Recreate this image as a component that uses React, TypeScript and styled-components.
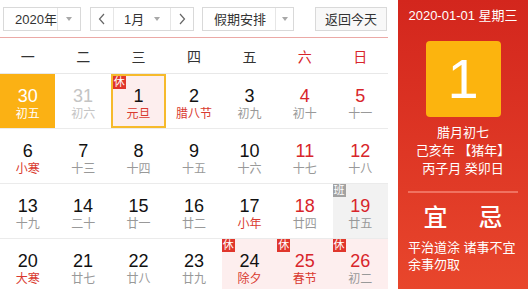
import styled, {createGlobalStyle, css} from "styled-components";

type Day = {
    num: number;
    lunar: string;
    other?: boolean;
    today?: boolean;
    selected?: boolean;
    weekend?: boolean;
    festival?: boolean;
    badge?: "休" | "班";
};

const weeks: Day[][] = [
    [
        {num: 30, lunar: "初五", other: true, today: true},
        {num: 31, lunar: "初六", other: true},
        {num: 1, lunar: "元旦", selected: true, festival: true, badge: "休"},
        {num: 2, lunar: "腊八节", festival: true},
        {num: 3, lunar: "初九"},
        {num: 4, lunar: "初十", weekend: true},
        {num: 5, lunar: "十一", weekend: true},
    ],
    [
        {num: 6, lunar: "小寒", festival: true},
        {num: 7, lunar: "十三"},
        {num: 8, lunar: "十四"},
        {num: 9, lunar: "十五"},
        {num: 10, lunar: "十六"},
        {num: 11, lunar: "十七", weekend: true},
        {num: 12, lunar: "十八", weekend: true},
    ],
    [
        {num: 13, lunar: "十九"},
        {num: 14, lunar: "二十"},
        {num: 15, lunar: "廿一"},
        {num: 16, lunar: "廿二"},
        {num: 17, lunar: "小年", festival: true},
        {num: 18, lunar: "廿四", weekend: true},
        {num: 19, lunar: "廿五", weekend: true, badge: "班"},
    ],
    [
        {num: 20, lunar: "大寒", festival: true},
        {num: 21, lunar: "廿七"},
        {num: 22, lunar: "廿八"},
        {num: 23, lunar: "廿九"},
        {num: 24, lunar: "除夕", festival: true, badge: "休"},
        {num: 25, lunar: "春节", weekend: true, festival: true, badge: "休"},
        {num: 26, lunar: "初二", weekend: true, badge: "休"},
    ],
];

const weekdays = ["一", "二", "三", "四", "五", "六", "日"];

const Chevron = ({dir}: { dir: "left" | "right" }) => (
    <svg width="8" height="12" viewBox="0 0 8 12">
        <polyline
            points={dir === "left" ? "6,1 1.5,6 6,11" : "2,1 6.5,6 2,11"}
            fill="none"
            stroke="#666"
            strokeWidth="1.2"
        />
    </svg>
);

export default function App() {
    return (
        <>
            <GlobalStyle/>
            <Widget>
                <Main>
                    <Toolbar>
                        <SelectBox $width={78}>
                            <SelectLabel>2020年</SelectLabel>
                            <CaretCell><Caret/></CaretCell>
                        </SelectBox>
                        <MonthGroup>
                            <StepButton><Chevron dir="left"/></StepButton>
                            <MonthLabel>
                                <span>1月</span>
                                <Caret/>
                            </MonthLabel>
                            <StepButton><Chevron dir="right"/></StepButton>
                        </MonthGroup>
                        <SelectBox $width={92}>
                            <SelectLabel>假期安排</SelectLabel>
                            <CaretCell $narrow><Caret/></CaretCell>
                        </SelectBox>
                        <TodayButton>返回今天</TodayButton>
                    </Toolbar>

                    <WeekHeader>
                        {weekdays.map((w, i) => (
                            <WeekdayCell key={w} $weekend={i >= 5}>{w}</WeekdayCell>
                        ))}
                    </WeekHeader>

                    {weeks.map((week, wi) => (
                        <WeekRow key={wi}>
                            {week.map(d => (
                                <DayCell
                                    key={`${wi}-${d.num}`}
                                    $today={d.today}
                                    $selected={d.selected}
                                    $rest={d.badge === "休"}
                                    $work={d.badge === "班"}
                                >
                                    {d.badge && <Badge $work={d.badge === "班"}>{d.badge}</Badge>}
                                    <DayNum $today={d.today} $other={d.other} $weekend={d.weekend}>
                                        {d.num}
                                    </DayNum>
                                    <Lunar $today={d.today} $other={d.other} $festival={d.festival}>
                                        {d.lunar}
                                    </Lunar>
                                </DayCell>
                            ))}
                        </WeekRow>
                    ))}
                </Main>

                <Side>
                    <SideDate>2020-01-01 星期三</SideDate>
                    <BigDay>1</BigDay>
                    <LunarInfo>
                        <div>腊月初七</div>
                        <div>己亥年 【猪年】</div>
                        <div>丙子月 癸卯日</div>
                    </LunarInfo>
                    <SideRule/>
                    <YiJi>
                        <span>宜</span>
                        <span>忌</span>
                    </YiJi>
                    <Advice>
                        平治道涂 诸事不宜<br/>余事勿取
                    </Advice>
                </Side>
            </Widget>
        </>
    );
}

const GlobalStyle = createGlobalStyle`
    body {
        margin: 0;
        background: #fff;
        font-family: "Liberation Sans", Arial, "Noto Sans CJK SC", sans-serif;
    }
`

const Widget = styled.div`
    display: flex;
    justify-content: space-between;
    width: 528px;
    height: 289px;
    overflow: hidden;
`

const Main = styled.div`
    width: 388px;
    flex: 0 0 388px;
`

const Toolbar = styled.div`
    display: flex;
    align-items: center;
    height: 37px;
    padding-left: 3px;
    border-bottom: 1px solid #eba9a6;
    color: #333;
    font-size: 13px;
`

const boxBorder = css`
    border: 1px solid #d9d9d9;
    background: #fff;
    box-sizing: border-box;
    height: 24px;
`

const SelectBox = styled.div<{ $width: number }>`
    ${boxBorder};
    display: flex;
    width: ${p => p.$width}px;
    margin-right: 9px;
`

const SelectLabel = styled.div`
    flex: 1;
    display: flex;
    align-items: center;
    padding-left: 11px;
    white-space: nowrap;
`

const CaretCell = styled.div<{ $narrow?: boolean }>`
    width: ${p => (p.$narrow ? 17 : 23)}px;
    display: flex;
    align-items: center;
    justify-content: center;
    border-left: 1px solid #e6e6e6;
`

const Caret = styled.i`
    display: inline-block;
    width: 0;
    height: 0;
    border-left: 3.5px solid transparent;
    border-right: 3.5px solid transparent;
    border-top: 4px solid #a8a8a8;
`

const MonthGroup = styled.div`
    ${boxBorder};
    display: flex;
    width: 104px;
    margin-right: 8px;
`

const StepButton = styled.div`
    width: 22px;
    display: flex;
    align-items: center;
    justify-content: center;
`

const MonthLabel = styled.div`
    flex: 1;
    display: flex;
    align-items: center;
    justify-content: space-between;
    padding: 0 10px;
    border-left: 1px solid #e6e6e6;
    border-right: 1px solid #e6e6e6;
`

const TodayButton = styled.div`
    ${boxBorder};
    width: 72px;
    margin-left: 12px;
    display: flex;
    align-items: center;
    justify-content: center;
    background: #f8f8f8;
`

const WeekHeader = styled.div`
    display: grid;
    grid-template-columns: repeat(7, 1fr);
    height: 35px;
    border-bottom: 1px solid #e8e8e8;
`

const WeekdayCell = styled.div<{ $weekend?: boolean }>`
    display: flex;
    align-items: center;
    justify-content: center;
    font-size: 14px;
    color: ${p => (p.$weekend ? "#d8252b" : "#333")};
`

const WeekRow = styled.div`
    display: grid;
    grid-template-columns: repeat(7, 1fr);
    height: 55px;
    box-sizing: border-box;
    border-bottom: 1px solid #ebebeb;
`

const DayCell = styled.div<{ $today?: boolean; $selected?: boolean; $rest?: boolean; $work?: boolean }>`
    position: relative;
    display: flex;
    flex-direction: column;
    align-items: center;
    padding-top: 12px;
    box-sizing: border-box;
    background: ${p => p.$today ? "#fbb114" : p.$rest ? "#fdeeee" : p.$work ? "#f2f2f2" : "transparent"};
    ${p => p.$selected && css`
        border: 2px solid #f6ba2c;
        padding-top: 10px;
    `}
`

const Badge = styled.span<{ $work?: boolean }>`
    position: absolute;
    top: 0;
    left: 0;
    width: 13px;
    height: 13px;
    line-height: 13px;
    font-size: 11px;
    text-align: center;
    color: #fff;
    background: ${p => (p.$work ? "#a2a2a2" : "#e0362c")};
`

const DayNum = styled.div<{ $today?: boolean; $other?: boolean; $weekend?: boolean }>`
    font-size: 18px;
    line-height: 20px;
    color: ${p => p.$today ? "#fff" : p.$other ? "#c4c4c4" : p.$weekend ? "#d8252b" : "#111"};
`

const Lunar = styled.div<{ $today?: boolean; $other?: boolean; $festival?: boolean }>`
    font-size: 12px;
    line-height: 16px;
    color: ${p => p.$today ? "#fff" : p.$other ? "#c4c4c4" : p.$festival ? "#d93a30" : "#999"};
`

const Side = styled.div`
    width: 130px;
    flex: 0 0 130px;
    display: flex;
    flex-direction: column;
    align-items: center;
    color: #fff;
    background: linear-gradient(180deg, #d3261d 0%, #e8462c 100%);
`

const SideDate = styled.div`
    margin-top: 8px;
    font-size: 13px;
    line-height: 16px;
    white-space: nowrap;
`

const BigDay = styled.div`
    margin-top: 17px;
    width: 75px;
    height: 76px;
    border-radius: 4px;
    background: #fcb40e;
    display: flex;
    align-items: center;
    justify-content: center;
    font-size: 56px;
    line-height: 1;
`

const LunarInfo = styled.div`
    margin-top: 7px;
    font-size: 13px;
    line-height: 18px;
    text-align: center;
    white-space: nowrap;
`

const SideRule = styled.div`
    margin-top: 13px;
    width: 110px;
    height: 2px;
    background: #f07260;
`

const YiJi = styled.div`
    margin-top: 12px;
    width: 110px;
    display: grid;
    grid-template-columns: 1fr 1fr;
    text-align: center;
    font-size: 24px;
    line-height: 26px;
    font-weight: 500;
`

const Advice = styled.div`
    margin-top: 8px;
    width: 110px;
    font-size: 13px;
    line-height: 17px;
    white-space: nowrap;
`
